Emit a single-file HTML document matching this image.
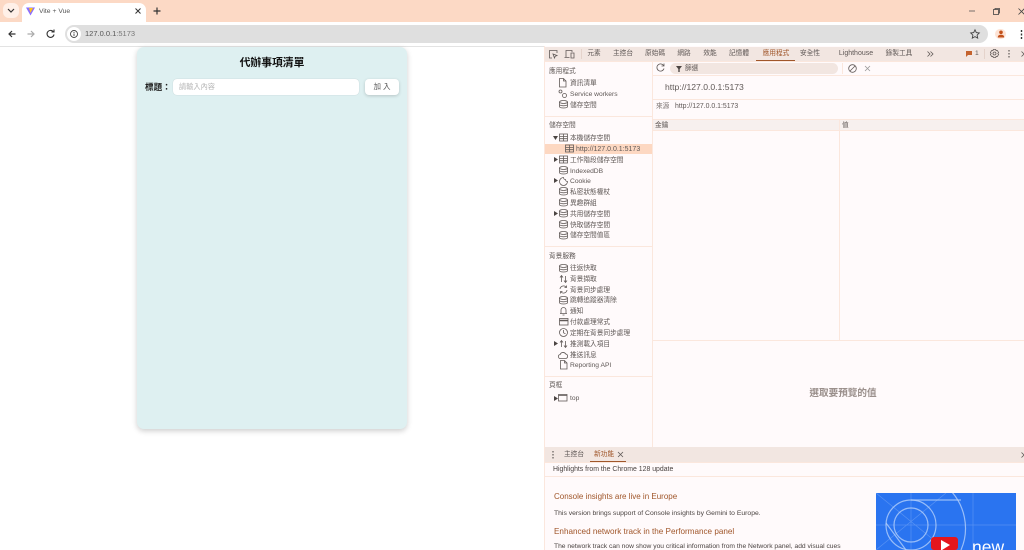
<!DOCTYPE html>
<html lang="zh-Hant"><head><meta charset="utf-8"><title>Vite + Vue</title>
<style>
html,body{margin:0;padding:0;width:1024px;height:550px;overflow:hidden;background:#fff;font-family:"Liberation Sans","Noto Sans CJK TC",sans-serif}
#w{position:relative;width:1024px;height:550px;overflow:hidden}
.a{position:absolute}
.t{position:absolute;white-space:nowrap;line-height:10px;font-size:6.7px;color:#5f5856;margin-top:1px}
.c{transform:translateX(-50%)}
.r{position:absolute;background:#fbe7dd}
svg{position:absolute;overflow:visible;fill:none;stroke:#615a58;stroke-width:.8}
</style></head><body><div id="w">
<svg width="0" height="0" style="position:absolute"><defs>
<g id="db"><ellipse cx="4.500" cy="2" rx="4" ry="1.500"/><path d="M.5 2v4.500c0 .9 1.800 1.500 4 1.500s4-.6 4-1.500V2M.5 4.300c0 .9 1.800 1.500 4 1.500s4-.6 4-1.500"/></g>
<g id="tb"><rect x=".5" y="1" width="8" height="7"/><path d="M.5 3.400h8M.5 5.700h8M4.500 1v7"/></g>
<g id="doc"><path d="M1.500.5h4l2.500 2.500v6H1.500zM5.500.5V3H8"/></g>
<g id="ud"><path d="M2.500 8V2M1 3.500l1.500-2 1.500 2M6.500 2v6M5 6.500l1.500 2 1.500-2"/></g>
</defs></svg>

<!-- browser chrome -->
<div class="a" style="left:0;top:0;width:1024px;height:22px;background:#fcd9c5"></div>
<div class="a" style="left:3px;top:3px;width:16px;height:15px;border-radius:6px;background:#fff0e8"></div>
<svg style="left:7px;top:8px" width="8" height="5"><path d="M1 1l3 3 3-3" stroke="#333" stroke-width="1.200"/></svg>
<div class="a" style="left:22px;top:3px;width:124px;height:20px;background:#fff;border-radius:7px 7px 0 0"></div>
<svg style="left:26px;top:7px" width="9" height="9"><path d="M0 .5L4.500 8.500 9 .5z" fill="#8a6cff" stroke="none"/><path d="M3 1L4.500 6 7 1z" fill="#ffc517" stroke="none"/></svg>
<div class="t" style="left:39px;top:6px;font-size:6.800px;color:#555">Vite + Vue</div>
<svg style="left:135px;top:8px" width="6" height="6"><path d="M.5.500l5 5M5.500.5l-5 5" stroke="#333" stroke-width="1"/></svg>
<svg style="left:153px;top:7px" width="8" height="8"><path d="M4 .5v7M.5 4h7" stroke="#333" stroke-width="1.200"/></svg>
<svg style="left:969px;top:10px" width="6" height="2"><path d="M0 1h6" stroke="#555"/></svg>
<svg style="left:993px;top:8px" width="7" height="7"><rect x=".5" y="1.500" width="5" height="5" stroke="#444"/><path d="M2 1.500V.5h4.500V5H5.500" stroke="#444"/></svg>
<svg style="left:1018px;top:8px" width="6" height="6"><path d="M.5.500l6 6M6.500.5l-6 6" stroke="#444"/></svg>

<div class="a" style="left:0;top:22px;width:1024px;height:24px;background:#fff;border-radius:7px 7px 0 0"></div>
<div class="a" style="left:0;top:46px;width:545px;height:1px;background:#e3e3e3"></div>
<svg style="left:8px;top:30px" width="8" height="8"><path d="M7.500 4H1M4 1L1 4l3 3" stroke="#333" stroke-width="1.200"/></svg>
<svg style="left:27px;top:30px" width="8" height="8"><path d="M.5 4H7M4 1l3 3-3 3" stroke="#aaa" stroke-width="1.200"/></svg>
<svg style="left:46px;top:29px" width="9" height="9"><path d="M7.500 3A3.500 3.500 0 1 0 8 5.500M8 .5V3H5.500" stroke="#333" stroke-width="1.100"/></svg>
<div class="a" style="left:65px;top:25px;width:923px;height:18px;border-radius:9px;background:#dfdfdf"></div>
<div class="a" style="left:67px;top:27px;width:14px;height:14px;border-radius:7px;background:#fff"></div>
<svg style="left:70px;top:30px" width="8" height="8"><circle cx="4" cy="4" r="3.500" stroke="#444" stroke-width=".9"/><path d="M4 3.500V6M4 2v1" stroke="#444" stroke-width=".9"/></svg>
<div class="t" style="left:85px;top:28px;font-size:7.500px;color:#555">127.0.0.1<span style="color:#777">:5173</span></div>
<svg style="left:970px;top:29px" width="10" height="10"><path d="M5 .8l1.300 2.800 3 .4-2.200 2.100.6 3L5 7.600 2.300 9.100l.6-3L.7 4l3-.4z" stroke="#444" stroke-width=".9"/></svg>
<div class="a" style="left:995px;top:29px;width:11px;height:10px;border-radius:5px;background:#fde3d5"></div>
<svg style="left:997px;top:30px" width="8" height="8"><circle cx="4" cy="2.300" r="1.800" fill="#c2511a" stroke="none"/><path d="M.8 7.500C.8 5.500 2 4.800 4 4.800s3.200.7 3.200 2.700z" fill="#c2511a" stroke="none"/></svg>
<svg style="left:1020px;top:30px" width="3" height="9"><path d="M1.500 0v2M1.500 3.500v2M1.500 7v2" stroke="#333" stroke-width="1.400"/></svg>

<!-- page -->
<div class="a" style="left:137px;top:47px;width:270px;height:382px;background:#def0f1;border-radius:7px;box-shadow:0 2px 6px rgba(0,0,0,.2)"></div>
<div class="t c" style="left:272px;top:57px;font-size:10.800px;font-weight:bold;color:#111">代辦事項清單</div>
<div class="t" style="left:145px;top:81px;font-size:8.600px;font-weight:bold;color:#222">標題：</div>
<div class="a" style="left:173px;top:79px;width:186px;height:16px;background:#fff;border-radius:4px;box-shadow:0 0 1px rgba(0,0,0,.2)"></div>
<div class="t" style="left:179px;top:81px;font-size:7.200px;color:#b5b5b5">請輸入內容</div>
<div class="a" style="left:365px;top:79px;width:34px;height:16px;background:#fff;border-radius:4px;box-shadow:0 1px 3px rgba(0,0,0,.18)"></div>
<div class="t c" style="left:383px;top:81px;font-size:7.500px;letter-spacing:2px;color:#555">加入</div>

<!-- devtools -->
<div class="a" style="left:545px;top:46px;width:479px;height:504px;background:#fffafb"></div>
<div class="r" style="left:544px;top:46px;width:1px;height:504px"></div>
<div class="a" style="left:545px;top:47px;width:479px;height:14px;background:#f2e6e1"></div>
<div class="r" style="left:545px;top:61px;width:479px;height:1px"></div>
<svg style="left:549px;top:50px" width="9" height="9"><path d="M3 8H.5V.5h7.500V3M4 4l4 1.500-1.800.7L5.500 8z"/></svg>
<svg style="left:564px;top:50px" width="11" height="9"><path d="M2 7V.5h6V2M.5 7.500h5M7 3h3v5H7z"/></svg>
<div class="r" style="left:581px;top:49px;width:1px;height:10px;background:#e5d3cb"></div>
<div class="t c" style="left:594px;top:48px">元素</div>
<div class="t c" style="left:623px;top:48px">主控台</div>
<div class="t c" style="left:655px;top:48px">原始碼</div>
<div class="t c" style="left:684px;top:48px">網路</div>
<div class="t c" style="left:710px;top:48px">效能</div>
<div class="t c" style="left:739px;top:48px">記憶體</div>
<div class="t c" style="left:776px;top:48px;color:#a0562a">應用程式</div>
<div class="a" style="left:756px;top:60px;width:39px;height:1px;background:#a0562a"></div>
<div class="t c" style="left:810px;top:48px">安全性</div>
<div class="t c" style="left:856px;top:48px;font-size:7px">Lighthouse</div>
<div class="t c" style="left:899px;top:48px">錄製工具</div>
<svg style="left:927px;top:51px" width="7" height="6"><path d="M.5.500L3 3 .5 5.500M3.500.5L6 3 3.500 5.500"/></svg>
<div class="r" style="left:984px;top:49px;width:1px;height:10px;background:#e5d3cb"></div>
<svg style="left:966px;top:51px" width="6" height="6"><path d="M0 0h6v4H2L0 6z" fill="#c4622d" stroke="none"/></svg>
<div class="t" style="left:975px;top:48px">1</div>
<svg style="left:990px;top:49px" width="9" height="9"><circle cx="4.500" cy="4.500" r="1.500"/><path d="M3.300.5h2.400l.4 1.200 1.300-.2L8.600 3.600l-.8 .9.800.9-1.200 2.100-1.300-.2-.4 1.200H3.300l-.4-1.200-1.300.2L.4 5.400l.8-.9-.8-.9 1.200-2.100 1.300.2z"/></svg>
<svg style="left:1008px;top:50px" width="2" height="8"><path d="M1 0v1.500M1 3v1.500M1 6v1.500" stroke-width="1.200"/></svg>
<svg style="left:1021px;top:51px" width="3" height="6" ><path d="M.5.500l2.500 2.500L.5 5.500"/></svg>

<!-- sidebar -->
<div class="r" style="left:652px;top:62px;width:1px;height:385px"></div>
<div class="r" style="left:545px;top:116px;width:107px;height:1px"></div>
<div class="r" style="left:545px;top:246px;width:107px;height:1px"></div>
<div class="r" style="left:545px;top:376px;width:107px;height:1px"></div>
<div class="a" style="left:545px;top:144px;width:107px;height:10px;background:#fdd8c2"></div>

<div class="t" style="left:549px;top:66px">應用程式</div>
<svg style="left:558px;top:78px" width="10" height="10"><use href="#doc"/></svg><div class="t" style="left:570px;top:78px">資訊清單</div>
<svg style="left:558px;top:89px" width="10" height="10"><circle cx="2.500" cy="2.500" r="1.500"/><circle cx="6.500" cy="6.500" r="2"/></svg><div class="t" style="left:570px;top:89px">Service workers</div>
<svg style="left:559px;top:100px" width="10" height="10"><use href="#db"/></svg><div class="t" style="left:570px;top:100px">儲存空間</div>

<div class="t" style="left:549px;top:120px">儲存空間</div>
<svg style="left:553px;top:136px" width="5" height="5"><path d="M0 0h5L2.500 4z" fill="#4c4543" stroke="none"/></svg>
<svg style="left:559px;top:133px" width="10" height="10"><use href="#tb"/></svg><div class="t" style="left:570px;top:133px">本機儲存空間</div>
<svg style="left:565px;top:144px" width="10" height="10"><use href="#tb"/></svg><div class="t" style="left:576px;top:144px;font-size:7px">http://127.0.0.1:5173</div>
<svg style="left:554px;top:157px" width="4" height="5"><path d="M0 0v5l4-2.500z" fill="#4c4543" stroke="none"/></svg>
<svg style="left:559px;top:155px" width="10" height="10"><use href="#tb"/></svg><div class="t" style="left:570px;top:155px">工作階段儲存空間</div>
<svg style="left:559px;top:166px" width="10" height="10"><use href="#db"/></svg><div class="t" style="left:570px;top:166px">IndexedDB</div>
<svg style="left:554px;top:178px" width="4" height="5"><path d="M0 0v5l4-2.500z" fill="#4c4543" stroke="none"/></svg>
<svg style="left:559px;top:177px" width="10" height="10"><path d="M4.500.5a4 4 0 1 0 4 4 2 2 0 0 1-2-2 2 2 0 0 1-2-2z"/></svg><div class="t" style="left:570px;top:176px">Cookie</div>
<svg style="left:559px;top:187px" width="10" height="10"><use href="#db"/></svg><div class="t" style="left:570px;top:187px">私密狀態權杖</div>
<svg style="left:559px;top:198px" width="10" height="10"><use href="#db"/></svg><div class="t" style="left:570px;top:198px">異趣群組</div>
<svg style="left:554px;top:211px" width="4" height="5"><path d="M0 0v5l4-2.500z" fill="#4c4543" stroke="none"/></svg>
<svg style="left:559px;top:209px" width="10" height="10"><use href="#db"/></svg><div class="t" style="left:570px;top:209px">共用儲存空間</div>
<svg style="left:559px;top:220px" width="10" height="10"><use href="#db"/></svg><div class="t" style="left:570px;top:220px">快取儲存空間</div>
<svg style="left:559px;top:231px" width="10" height="10"><use href="#db"/></svg><div class="t" style="left:570px;top:230px">儲存空間值區</div>

<div class="t" style="left:549px;top:251px">背景服務</div>
<svg style="left:559px;top:264px" width="10" height="10"><use href="#db"/></svg><div class="t" style="left:570px;top:263px">往返快取</div>
<svg style="left:559px;top:274px" width="10" height="10"><use href="#ud"/></svg><div class="t" style="left:570px;top:274px">背景擷取</div>
<svg style="left:559px;top:285px" width="10" height="10"><path d="M1 4a3.500 3.500 0 0 1 6-2M8 5a3.500 3.500 0 0 1-6 2M7.500 .5V2.500H5.500M1.500 8.500V6.500h2"/></svg><div class="t" style="left:570px;top:285px">背景同步處理</div>
<svg style="left:559px;top:296px" width="10" height="10"><use href="#db"/></svg><div class="t" style="left:570px;top:295px">跳轉追蹤器清除</div>
<svg style="left:559px;top:306px" width="10" height="10"><path d="M1 7.500h7M2 7.500V4a2.500 2.500 0 0 1 5 0v3.500M3.500 9h2"/></svg><div class="t" style="left:570px;top:306px">通知</div>
<svg style="left:559px;top:317px" width="10" height="10"><rect x=".5" y="1.500" width="8.500" height="6.500"/><path d="M.5 3.500h8.500" stroke-width="1.500"/></svg><div class="t" style="left:570px;top:317px">付款處理常式</div>
<svg style="left:559px;top:328px" width="10" height="10"><circle cx="4.500" cy="4.500" r="4"/><path d="M4.500 2v2.800l2 1"/></svg><div class="t" style="left:570px;top:328px">定期在背景同步處理</div>
<svg style="left:554px;top:341px" width="4" height="5"><path d="M0 0v5l4-2.500z" fill="#4c4543" stroke="none"/></svg>
<svg style="left:559px;top:339px" width="10" height="10"><use href="#ud"/></svg><div class="t" style="left:570px;top:339px">推測載入項目</div>
<svg style="left:558px;top:350px" width="10" height="10"><path d="M2.500 8.500a2 2 0 0 1-.3-4 3 3 0 0 1 5.500-.5 2.300 2.300 0 0 1 .2 4.500z"/></svg><div class="t" style="left:570px;top:350px">推送訊息</div>
<svg style="left:559px;top:360px" width="10" height="10"><use href="#doc"/></svg><div class="t" style="left:570px;top:360px">Reporting API</div>

<div class="t" style="left:549px;top:380px">頁框</div>
<svg style="left:554px;top:396px" width="4" height="5"><path d="M0 0v5l4-2.500z" fill="#4c4543" stroke="none"/></svg>
<svg style="left:558px;top:394px" width="10" height="8"><rect x=".5" y=".5" width="8.500" height="6.500"/><path d="M.5 1.500h8.500"/></svg><div class="t" style="left:570px;top:393px">top</div>

<!-- main panel -->
<svg style="left:656px;top:63px" width="9" height="9"><path d="M7.800 3A3.600 3.600 0 1 0 8 5.500M8 .5V3H5.500"/></svg>
<div class="a" style="left:670px;top:63px;width:168px;height:11px;border-radius:6px;background:#f2e6e1"></div>
<svg style="left:676px;top:66px" width="6" height="6"><path d="M0 0h6L3.700 3v3H2.300V3z" fill="#4c4543" stroke="none"/></svg>
<div class="t" style="left:685px;top:63px">篩選</div>
<div class="r" style="left:842px;top:63px;width:1px;height:11px"></div>
<svg style="left:848px;top:64px" width="9" height="9"><circle cx="4.500" cy="4.500" r="3.800"/><path d="M2 7l5-5"/></svg>
<svg style="left:865px;top:66px" width="5" height="5"><path d="M0 0l5 5M5 0L0 5" stroke="#999"/></svg>
<div class="r" style="left:653px;top:75px;width:371px;height:1px"></div>
<div class="t" style="left:665px;top:81px;font-size:8.600px">http://127.0.0.1:5173</div>
<div class="r" style="left:653px;top:99px;width:371px;height:1px"></div>
<div class="t" style="left:656px;top:101px;color:#7a7270">來源</div>
<div class="t" style="left:675px;top:101px;font-size:6.900px">http://127.0.0.1:5173</div>
<div class="a" style="left:653px;top:119px;width:371px;height:11px;background:#f7f0ee"></div>
<div class="r" style="left:653px;top:119px;width:371px;height:1px"></div>
<div class="r" style="left:653px;top:130px;width:371px;height:1px"></div>
<div class="r" style="left:839px;top:119px;width:1px;height:221px"></div>
<div class="t" style="left:655px;top:120px">金鑰</div>
<div class="t" style="left:842px;top:120px">值</div>
<div class="r" style="left:653px;top:340px;width:371px;height:1px"></div>
<div class="t c" style="left:843px;top:388px;font-size:9.600px;font-weight:bold;color:#9a8f8b">選取要預覽的值</div>

<!-- drawer -->
<div class="a" style="left:545px;top:447px;width:479px;height:15px;background:#f2e6e1"></div>
<div class="r" style="left:545px;top:462px;width:479px;height:1px"></div>
<svg style="left:552px;top:451px" width="2" height="8"><path d="M1 0v1.500M1 3v1.500M1 6v1.500" stroke-width="1.200"/></svg>
<div class="t c" style="left:574px;top:449px">主控台</div>
<div class="t c" style="left:604px;top:449px;color:#a0562a">新功能</div>
<svg style="left:618px;top:452px" width="5" height="5"><path d="M0 0l5 5M5 0L0 5"/></svg>
<div class="a" style="left:590px;top:461px;width:36px;height:1px;background:#a0562a"></div>
<svg style="left:1021px;top:452px" width="3" height="6"><path d="M.5.500l2.500 2.500L.5 5.500"/></svg>
<div class="t" style="left:553px;top:464px;font-size:6.900px;color:#4a4341">Highlights from the Chrome 128 update</div>
<div class="r" style="left:545px;top:476px;width:479px;height:1px"></div>
<div class="t" style="left:554px;top:491px;font-size:8px;color:#a0562a">Console insights are live in Europe</div>
<div class="t" style="left:554px;top:508px;font-size:6.800px;color:#4a4341">This version brings support of Console insights by Gemini to Europe.</div>
<div class="t" style="left:554px;top:526px;font-size:8.150px;color:#a0562a">Enhanced network track in the Performance panel</div>
<div class="t" style="left:554px;top:543px;font-size:6.700px;line-height:6px;color:#4a4341">The network track can now show you critical information from the Network panel, add visual cues</div>

<svg style="left:876px;top:493px;stroke:none;overflow:hidden" width="140" height="57" viewBox="0 0 140 57">
<rect width="140" height="57" fill="#2a74f0"/>
<g fill="none" stroke="#a8c8f8" stroke-opacity=".35" stroke-width=".7"><path d="M0 32h140M35 0v57M97 0v57M0 0l70 57M70 0L0 57"/></g>
<g fill="none" stroke="#b4d0fa" stroke-opacity=".8" stroke-width="1.200"><path d="M60 32a25 25 0 0 1-50 0a25 25 0 0 1 50 0z"/><circle cx="35" cy="32" r="17"/><path d="M35 7h50M10 30l20 27"/><path d="M72 -5A55 55 0 0 1 85 57"/></g>
<rect x="55" y="44" width="27" height="13" rx="3" fill="#e5161d"/>
<path d="M65 47v10h1l8-5z" fill="#fff"/>
<text x="96" y="57" fill="#fff" stroke="none" font-size="17.500" font-family="Liberation Sans,sans-serif" dy="3">new</text>
</svg>
</div></body></html>
